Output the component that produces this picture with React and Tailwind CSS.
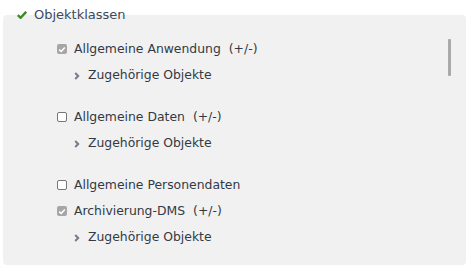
const items = [
  { label: "Allgemeine Anwendung", checked: true, toggle: true, sub: true },
  { label: "Allgemeine Daten", checked: false, toggle: true, sub: true },
  { label: "Allgemeine Personendaten", checked: false, toggle: false, sub: false },
  { label: "Archivierung-DMS", checked: true, toggle: true, sub: true },
];

function Box({ checked }) {
  if (!checked) {
    return <span className="w-[10px] h-[10px] ml-[54px] mr-[7px] rounded-[2px] border border-[#767676] bg-white" />;
  }
  return (
    <span className="w-[10px] h-[10px] ml-[54px] mr-[7px] rounded-[2px] bg-[#a6a6a6] flex items-center justify-center">
      <svg width="8" height="7" viewBox="0 0 8 7">
        <path d="M1.2 3.6 L3.2 5.4 L6.8 1.4" fill="none" stroke="#fff" strokeWidth="1.5" />
      </svg>
    </span>
  );
}

function Item({ item }) {
  return (
    <div className={item.sub ? "mb-[16px]" : ""}>
      <div className="flex items-center h-[26px]">
        <Box checked={item.checked} />
        <span>{item.label}</span>
        {item.toggle && <span className="ml-[8px]">(+/-)</span>}
      </div>
      {item.sub && (
        <div className="flex items-center h-[26px] pl-[71px]">
          <svg width="6" height="8" viewBox="0 0 6 8" className="mr-[8px] mt-[1px]">
            <path d="M1.2 1 L4.2 4 L1.2 7" fill="none" stroke="#7c7889" strokeWidth="2" />
          </svg>
          <span>Zugehörige Objekte</span>
        </div>
      )}
    </div>
  );
}

export default function App() {
  return (
    <div className="w-[472px] h-[272px] bg-white relative font-['DejaVu_Sans',sans-serif] text-[12.4px] text-[#333a45]">
      <div className="absolute left-[3px] top-[15px] w-[463px] h-[250px] bg-[#f1f1f1] rounded-[4px] overflow-hidden">
        <div className="pt-[21px]">
          {items.map((it) => (
            <Item key={it.label} item={it} />
          ))}
        </div>
        <div className="absolute left-[445px] top-[24px] w-[3px] h-[37px] bg-[#a9a9a9] rounded-[1px]" />
      </div>
      <div className="absolute left-[17px] top-[5px] flex items-center gap-[7px] text-[13px] text-[#3d4a5c]">
        <svg width="10" height="8" viewBox="0 0 10 8">
          <path d="M0.8 4.2 L3.6 6.8 L9.2 0.8" fill="none" stroke="#3b8a22" strokeWidth="2.4" />
        </svg>
        <span>Objektklassen</span>
      </div>
    </div>
  );
}
